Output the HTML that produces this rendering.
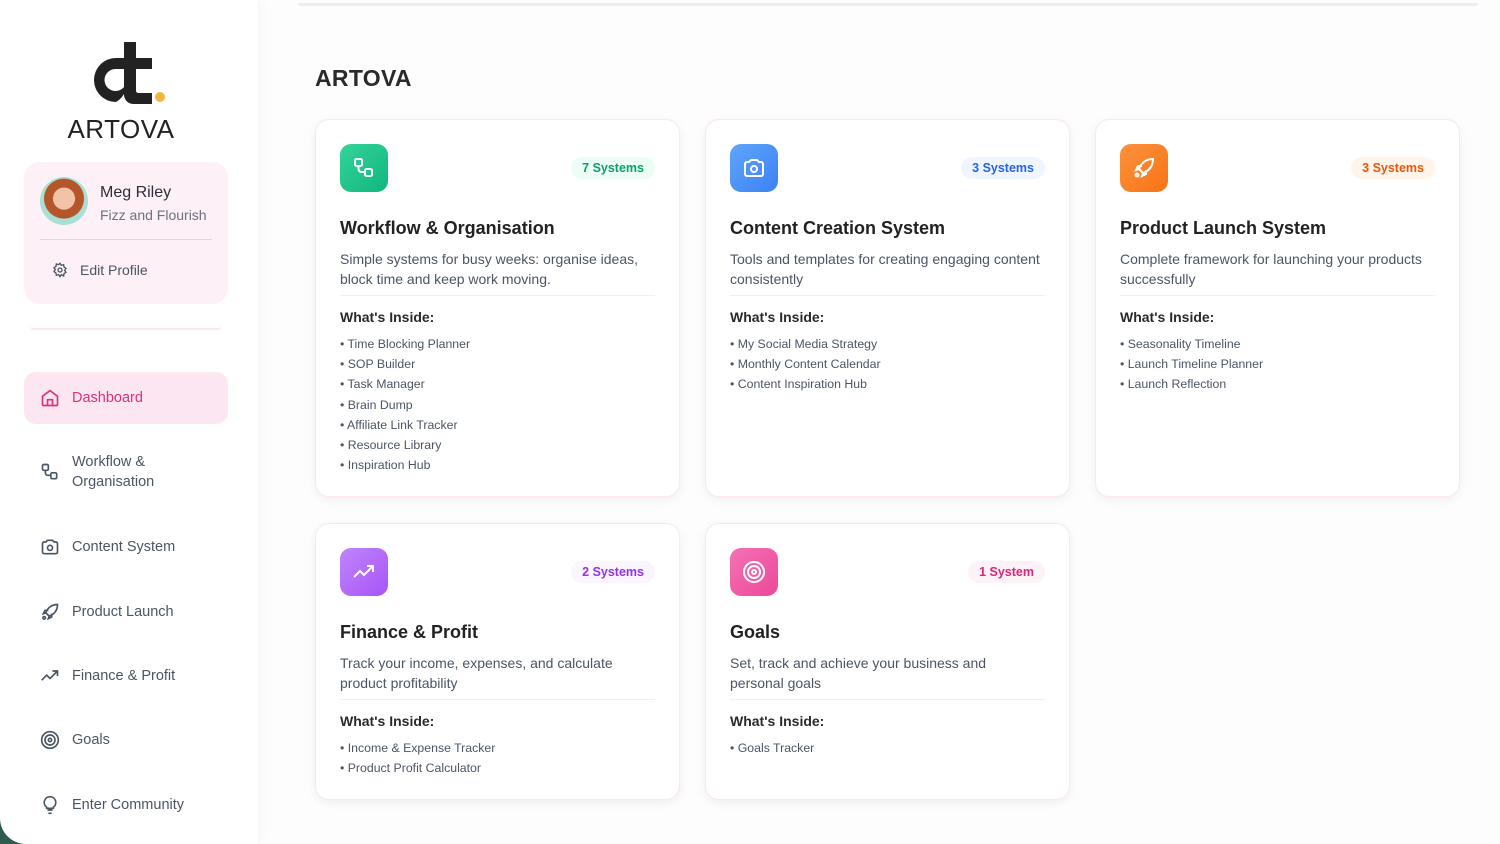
<!DOCTYPE html>
<html><head><meta charset="utf-8"><style>
*{box-sizing:border-box;margin:0;padding:0}
body{width:1500px;height:844px;overflow:hidden;background:#fdfdfd;font-family:"Liberation Sans",sans-serif;position:relative}
.corner{position:absolute;left:0;bottom:0;width:30px;height:30px;background:#2e5c50}
.side{position:absolute;left:0;top:0;width:258px;height:844px;background:#fff;border-bottom-left-radius:26px;box-shadow:2px 0 12px rgba(0,0,0,.04)}
.logo{position:absolute;left:72px;top:40px;width:110px}
.brand{position:absolute;left:0;width:242px;top:114px;text-align:center;font-size:26px;color:#222;letter-spacing:.5px}
.prof{position:absolute;left:24px;top:162px;width:204px;height:142px;background:#fdf0f6;border-radius:16px}
.av{position:absolute;left:16px;top:15px;width:48px;height:48px;border-radius:50%;background:radial-gradient(circle at 50% 45%,#f3c3a8 0 30%,#b4552a 32% 55%,#a8e0d6 57%)}
.nm{position:absolute;left:76px;top:22px;font-size:16px;color:#2a2e38}
.sub{position:absolute;left:76px;top:45px;font-size:14px;color:#6b7280}
.hr{position:absolute;left:16px;right:16px;top:77px;border-top:1px solid #f5cde0}
.ep{position:absolute;left:56px;top:100px;font-size:14px;color:#4b5563}
.epi{position:absolute;left:28px;top:100px}
.line2{position:absolute;left:30px;top:326px;width:192px;height:4px;border-bottom:2px solid #fde8f1;border-radius:0 0 6px 6px}
.nav{position:absolute;left:24px;width:204px;font-size:14.5px;color:#4b5563}
.nav svg{position:absolute;left:16px}
.nav span{position:absolute;left:48px;line-height:20px}
.act{background:#fce6f1;border-radius:12px;height:52px;top:372px;color:#e0307a}
.topline{position:absolute;left:298px;top:3px;width:1180px;height:3px;background:#eee;border-radius:2px}
h1{position:absolute;left:315px;top:65px;font-size:23px;font-weight:700;color:#2a2a2a;letter-spacing:.3px}
.card{position:absolute;width:365px;background:#fff;border:1px solid #fde6ef;border-radius:14px;box-shadow:0 3px 10px rgba(0,0,0,.06)}
.ic{position:absolute;left:24px;top:24px;width:48px;height:48px;border-radius:11px;display:flex;align-items:center;justify-content:center}
.bd{position:absolute;right:24px;top:37px;height:22px;line-height:22px;padding:0 11px;border-radius:11px;font-size:12.5px;font-weight:700}
.t{position:absolute;left:24px;top:98px;font-size:18px;font-weight:700;color:#222}
.d{position:absolute;left:24px;top:129px;width:320px;font-size:14px;line-height:20px;color:#4b5563}
.dv{position:absolute;left:24px;right:24px;top:175px;border-top:1px solid #f0f0f0}
.wi{position:absolute;left:24px;top:189px;font-size:14px;font-weight:700;color:#2a2a2a}
.ul{position:absolute;left:24px;top:214px;font-size:12.3px;line-height:20.2px;color:#4b5563}
</style></head><body>
<div class="corner"></div>
<div class="side">
<svg class="logo" viewBox="0 0 110 70"><path d="M44 62a22 22 0 1 1 0-44h8V2h12v16h16v11H64v22c0 1 1 2 3 2h13v11H62c-6 0-10-4-10-10V54a22 22 0 0 1-8 8zM44 29a11 11 0 1 0 8 18V29z" fill="#222"/><circle cx="88" cy="57" r="5" fill="#f0b53c"/></svg>
<div class="brand">ARTOVA</div>
<div class="prof"><div class="av"></div><div class="nm">Meg Riley</div><div class="sub">Fizz and Flourish</div><div class="hr"></div>
<svg class="epi" width="16" height="16" viewBox="0 0 24 24" fill="none" stroke="#4b5563" stroke-width="2"><circle cx="12" cy="12" r="3"/><path d="M12 2l2 3 3.5-1 .5 3.5 3 2-2 3 2 3-3 2-.5 3.5L14 19l-2 3-2-3-3.5 1L6 16.5l-3-2 2-3-2-3 3-2L6.5 3 10 4z"/></svg>
<div class="ep">Edit Profile</div></div>
<div class="line2"></div>
<div class="nav act"><svg style="top:16px" width="20" height="20" viewBox="0 0 24 24" fill="none" stroke="#e0307a" stroke-width="2"><path d="M3 10l9-7 9 7v10a1 1 0 0 1-1 1H4a1 1 0 0 1-1-1z"/><path d="M9 21v-7h6v7"/></svg><span style="top:16px">Dashboard</span></div>
<div class="nav" style="top:452px"><svg style="top:10px" width="20" height="20" viewBox="0 0 24 24" fill="none" stroke="#4b5563" stroke-width="2"><rect x="3" y="3" width="7" height="7" rx="1.5"/><rect x="13" y="13" width="7" height="7" rx="1.5"/><path d="M6.5 10v3a3 3 0 0 0 3 3H13"/></svg><span style="top:0">Workflow &amp;<br>Organisation</span></div>
<div class="nav" style="top:537px"><svg width="20" height="20" viewBox="0 0 24 24" fill="none" stroke="#4b5563" stroke-width="2"><path d="M3 8a2 2 0 0 1 2-2h2l2-2h6l2 2h2a2 2 0 0 1 2 2v10a2 2 0 0 1-2 2H5a2 2 0 0 1-2-2z"/><circle cx="12" cy="13" r="3"/></svg><span>Content System</span></div>
<div class="nav" style="top:602px"><svg width="20" height="20" viewBox="0 0 24 24" fill="none" stroke="#4b5563" stroke-width="2"><path d="M9 15l-2-2C9 7 14 3 21 3c0 7-4 12-10 14z"/><path d="M7 13l-3 1 2-4h4M11 17l-1 3 4-2v-4"/><circle cx="5" cy="19" r="1.5"/></svg><span>Product Launch</span></div>
<div class="nav" style="top:666px"><svg width="20" height="20" viewBox="0 0 24 24" fill="none" stroke="#4b5563" stroke-width="2"><path d="M2 17l6-6 4 4 9-9M15 6h6v6"/></svg><span>Finance &amp; Profit</span></div>
<div class="nav" style="top:730px"><svg width="20" height="20" viewBox="0 0 24 24" fill="none" stroke="#4b5563" stroke-width="2"><circle cx="12" cy="12" r="10"/><circle cx="12" cy="12" r="6"/><circle cx="12" cy="12" r="2"/></svg><span>Goals</span></div>
<div class="nav" style="top:795px"><svg width="20" height="20" viewBox="0 0 24 24" fill="none" stroke="#4b5563" stroke-width="2"><path d="M9 18h6M10 22h4M12 2a7 7 0 0 0-4 12.7V16h8v-1.3A7 7 0 0 0 12 2z"/></svg><span>Enter Community</span></div>
</div>
<div class="topline"></div>
<h1>ARTOVA</h1>

<div class="card" style="left:315px;top:119px;height:378px">
<div class="ic" style="background:linear-gradient(135deg,#34d399,#10b77f)"><svg width="24" height="24" viewBox="0 0 24 24" fill="none" stroke="#fff" stroke-width="2"><rect x="3" y="3" width="7" height="7" rx="1.5"/><rect x="13" y="13" width="7" height="7" rx="1.5"/><path d="M6.5 10v3a3 3 0 0 0 3 3H13"/></svg></div>
<div class="bd" style="background:#ecfdf5;color:#0f9d6b">7 Systems</div>
<div class="t">Workflow &amp; Organisation</div>
<div class="d">Simple systems for busy weeks: organise ideas, block time and keep work moving.</div><div class="dv"></div>
<div class="wi">What's Inside:</div>
<div class="ul">• Time Blocking Planner<br>• SOP Builder<br>• Task Manager<br>• Brain Dump<br>• Affiliate Link Tracker<br>• Resource Library<br>• Inspiration Hub</div></div>

<div class="card" style="left:705px;top:119px;height:378px">
<div class="ic" style="background:linear-gradient(135deg,#60a5fa,#3b82f6)"><svg width="24" height="24" viewBox="0 0 24 24" fill="none" stroke="#fff" stroke-width="2"><path d="M3 8a2 2 0 0 1 2-2h2l2-2h6l2 2h2a2 2 0 0 1 2 2v10a2 2 0 0 1-2 2H5a2 2 0 0 1-2-2z"/><circle cx="12" cy="13" r="3"/></svg></div>
<div class="bd" style="background:#eff6ff;color:#2563eb">3 Systems</div>
<div class="t">Content Creation System</div>
<div class="d">Tools and templates for creating engaging content consistently</div><div class="dv"></div>
<div class="wi">What's Inside:</div>
<div class="ul">• My Social Media Strategy<br>• Monthly Content Calendar<br>• Content Inspiration Hub</div></div>

<div class="card" style="left:1095px;top:119px;height:378px">
<div class="ic" style="background:linear-gradient(135deg,#fb923c,#f97316)"><svg width="24" height="24" viewBox="0 0 24 24" fill="none" stroke="#fff" stroke-width="2"><path d="M9 15l-2-2C9 7 14 3 21 3c0 7-4 12-10 14z"/><path d="M7 13l-3 1 2-4h4M11 17l-1 3 4-2v-4"/><circle cx="5" cy="19" r="1.5"/></svg></div>
<div class="bd" style="background:#fff4ea;color:#ea580c">3 Systems</div>
<div class="t">Product Launch System</div>
<div class="d">Complete framework for launching your products successfully</div><div class="dv"></div>
<div class="wi">What's Inside:</div>
<div class="ul">• Seasonality Timeline<br>• Launch Timeline Planner<br>• Launch Reflection</div></div>

<div class="card" style="left:315px;top:523px;height:277px">
<div class="ic" style="background:linear-gradient(135deg,#c084fc,#a855f7)"><svg width="24" height="24" viewBox="0 0 24 24" fill="none" stroke="#fff" stroke-width="2"><path d="M2 17l6-6 4 4 9-9M15 6h6v6"/></svg></div>
<div class="bd" style="background:#faf5ff;color:#9333ea">2 Systems</div>
<div class="t">Finance &amp; Profit</div>
<div class="d">Track your income, expenses, and calculate product profitability</div><div class="dv"></div>
<div class="wi">What's Inside:</div>
<div class="ul">• Income &amp; Expense Tracker<br>• Product Profit Calculator</div></div>

<div class="card" style="left:705px;top:523px;height:277px">
<div class="ic" style="background:linear-gradient(135deg,#f472b6,#ec4899)"><svg width="24" height="24" viewBox="0 0 24 24" fill="none" stroke="#fff" stroke-width="2"><circle cx="12" cy="12" r="10"/><circle cx="12" cy="12" r="6"/><circle cx="12" cy="12" r="2"/></svg></div>
<div class="bd" style="background:#fdf2f8;color:#db2777">1 System</div>
<div class="t">Goals</div>
<div class="d" style="width:280px">Set, track and achieve your business and personal goals</div><div class="dv"></div>
<div class="wi">What's Inside:</div>
<div class="ul">• Goals Tracker</div></div>
</body></html>
